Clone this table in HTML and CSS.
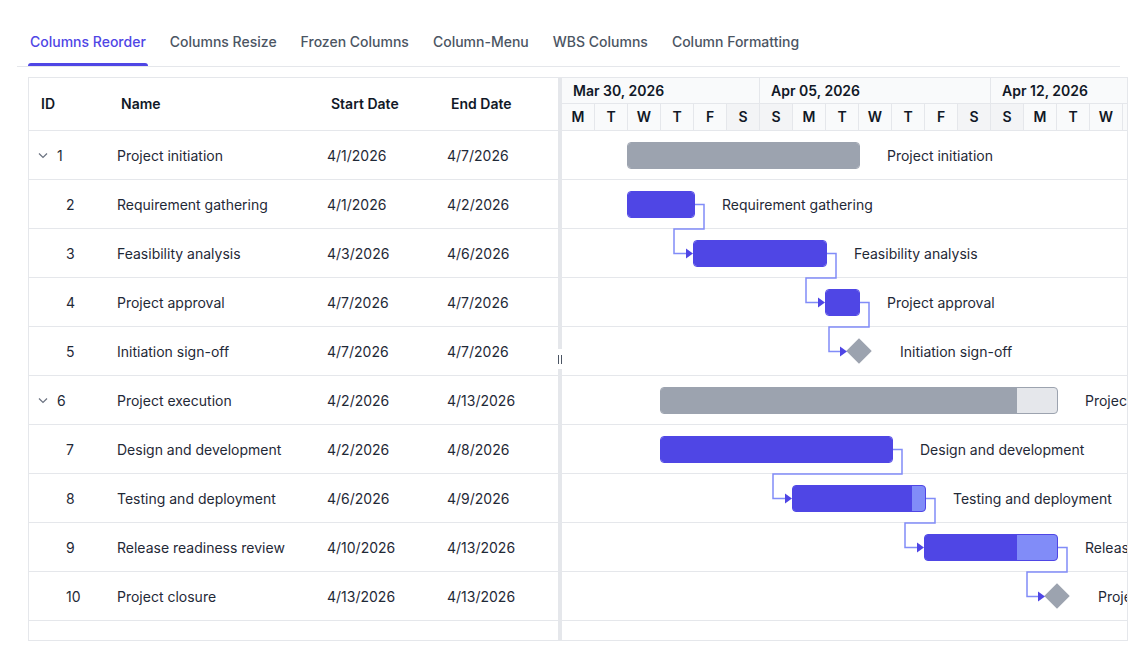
FILE: index.html
```html
<!DOCTYPE html>
<html lang="en">
<head>
<meta charset="utf-8">
<title>Gantt - Columns Reorder</title>
<link rel="stylesheet" href="styles.css">
</head>
<body>
<div class="page">
  <nav class="tabs">
    <div class="tab active">Columns Reorder</div>
    <div class="tab">Columns Resize</div>
    <div class="tab">Frozen Columns</div>
    <div class="tab">Column-Menu</div>
    <div class="tab">WBS Columns</div>
    <div class="tab">Column Formatting</div>
  </nav>

  <div class="gantt">
    <div class="grid">
      <div class="grid-row grid-head">
        <div class="cell">ID</div>
        <div class="cell">Name</div>
        <div class="cell">Start Date</div>
        <div class="cell">End Date</div>
      </div>
      <div class="grid-row">
        <div class="cell id"><svg class="chev" viewBox="0 0 12 12" width="12" height="12"><polyline points="2,4.5 6,8.5 10,4.5" fill="none" stroke="#6b7280" stroke-width="1.2"/></svg>1</div>
        <div class="cell">Project initiation</div>
        <div class="cell">4/1/2026</div>
        <div class="cell">4/7/2026</div>
      </div>
      <div class="grid-row">
        <div class="cell id"><span class="indent"></span>2</div>
        <div class="cell">Requirement gathering</div>
        <div class="cell">4/1/2026</div>
        <div class="cell">4/2/2026</div>
      </div>
      <div class="grid-row">
        <div class="cell id"><span class="indent"></span>3</div>
        <div class="cell">Feasibility analysis</div>
        <div class="cell">4/3/2026</div>
        <div class="cell">4/6/2026</div>
      </div>
      <div class="grid-row">
        <div class="cell id"><span class="indent"></span>4</div>
        <div class="cell">Project approval</div>
        <div class="cell">4/7/2026</div>
        <div class="cell">4/7/2026</div>
      </div>
      <div class="grid-row">
        <div class="cell id"><span class="indent"></span>5</div>
        <div class="cell">Initiation sign-off</div>
        <div class="cell">4/7/2026</div>
        <div class="cell">4/7/2026</div>
      </div>
      <div class="grid-row">
        <div class="cell id"><svg class="chev" viewBox="0 0 12 12" width="12" height="12"><polyline points="2,4.5 6,8.5 10,4.5" fill="none" stroke="#6b7280" stroke-width="1.2"/></svg>6</div>
        <div class="cell">Project execution</div>
        <div class="cell">4/2/2026</div>
        <div class="cell">4/13/2026</div>
      </div>
      <div class="grid-row">
        <div class="cell id"><span class="indent"></span>7</div>
        <div class="cell">Design and development</div>
        <div class="cell">4/2/2026</div>
        <div class="cell">4/8/2026</div>
      </div>
      <div class="grid-row">
        <div class="cell id"><span class="indent"></span>8</div>
        <div class="cell">Testing and deployment</div>
        <div class="cell">4/6/2026</div>
        <div class="cell">4/9/2026</div>
      </div>
      <div class="grid-row">
        <div class="cell id"><span class="indent"></span>9</div>
        <div class="cell">Release readiness review</div>
        <div class="cell">4/10/2026</div>
        <div class="cell">4/13/2026</div>
      </div>
      <div class="grid-row">
        <div class="cell id"><span class="indent"></span>10</div>
        <div class="cell">Project closure</div>
        <div class="cell">4/13/2026</div>
        <div class="cell">4/13/2026</div>
      </div>
    </div>

    <div class="splitter"><div class="gripper"><span></span><span></span></div></div>

    <div class="chart">
      <div class="tl-top">
        <div class="tl-month w6">Mar 30, 2026</div>
        <div class="tl-month w7">Apr 05, 2026</div>
        <div class="tl-month w7">Apr 12, 2026</div>
      </div>
      <div class="tl-days">
        <div class="day">M</div><div class="day">T</div><div class="day">W</div><div class="day">T</div><div class="day">F</div><div class="day we">S</div>
        <div class="day we">S</div><div class="day">M</div><div class="day">T</div><div class="day">W</div><div class="day">T</div><div class="day">F</div><div class="day we">S</div>
        <div class="day we">S</div><div class="day">M</div><div class="day">T</div><div class="day">W</div>
      </div>
      <div class="chart-body">
        <div class="c-row">
          <div class="bar parent" style="left:65px;width:233px"><div class="prog" style="width:100%"></div></div>
          <div class="label" style="left:325px">Project initiation</div>
        </div>
        <div class="c-row">
          <div class="bar" style="left:65px;width:68px"><div class="prog" style="width:100%"></div></div>
          <div class="label" style="left:160px">Requirement gathering</div>
        </div>
        <div class="c-row">
          <div class="bar" style="left:131px;width:134px"><div class="prog" style="width:100%"></div></div>
          <div class="label" style="left:292px">Feasibility analysis</div>
        </div>
        <div class="c-row">
          <div class="bar" style="left:263px;width:35px"><div class="prog" style="width:100%"></div></div>
          <div class="label" style="left:325px">Project approval</div>
        </div>
        <div class="c-row">
          <div class="ms" style="left:288px"></div>
          <div class="label" style="left:338px">Initiation sign-off</div>
        </div>
        <div class="c-row">
          <div class="bar parent" style="left:98px;width:398px"><div class="prog" style="width:90%"></div></div>
          <div class="label" style="left:523px">Project execution</div>
        </div>
        <div class="c-row">
          <div class="bar" style="left:98px;width:233px"><div class="prog" style="width:100%"></div></div>
          <div class="label" style="left:358px">Design and development</div>
        </div>
        <div class="c-row">
          <div class="bar" style="left:230px;width:134px"><div class="prog" style="width:90%"></div></div>
          <div class="label" style="left:391px">Testing and deployment</div>
        </div>
        <div class="c-row">
          <div class="bar" style="left:362px;width:134px"><div class="prog" style="width:70%"></div></div>
          <div class="label" style="left:523px">Release readiness review</div>
        </div>
        <div class="c-row">
          <div class="ms" style="left:486px"></div>
          <div class="label" style="left:536px">Project closure</div>
        </div>

        <svg class="links" width="565" height="490" viewBox="0 0 565 490">
          <g fill="none" stroke="#818cf8" stroke-width="1.5">
            <path d="M133 73.5 H142 V98 H112 V122.5 H126"/>
            <path d="M265 122.5 H274 V147 H244 V171.5 H258"/>
            <path d="M298 171.5 H307 V196 H267 V220.5 H278"/>
            <path d="M331 318.5 H340 V343 H211 V367.5 H225"/>
            <path d="M364 367.5 H373 V392 H343 V416.5 H357"/>
            <path d="M496 416.5 H505 V441 H465 V465.5 H476"/>
          </g>
          <g fill="#4f46e5">
            <path d="M124 117.5 L131 122.5 L124 127.5 Z"/>
            <path d="M256 166.5 L263 171.5 L256 176.5 Z"/>
            <path d="M278 215.5 L285 220.5 L278 225.5 Z"/>
            <path d="M223 362.5 L230 367.5 L223 372.5 Z"/>
            <path d="M355 411.5 L362 416.5 L355 421.5 Z"/>
            <path d="M476 460.5 L483 465.5 L476 470.5 Z"/>
          </g>
        </svg>
      </div>
    </div>
  </div>
</div>
</body>
</html>
```

FILE: styles.css
```css
* {
  box-sizing: border-box;
}

body {
  margin: 0;
  background: #ffffff;
  font-family: Inter, "Noto Sans", "Liberation Sans", sans-serif;
  font-size: 14px;
  color: #1f2937;
}

.page {
  padding: 30px 10px 0 17px;
}

/* Tabs */
.tabs {
  display: flex;
  gap: 20px;
  padding-left: 11px;
  margin-right: 8px;
  border-bottom: 1px solid #e5e7eb;
}

.tab {
  position: relative;
  padding: 0 2px 12px;
  line-height: 24px;
  font-weight: 500;
  color: #4b5563;
  white-space: nowrap;
}

.tab.active {
  color: #4f46e5;
}

.tab.active::after {
  content: "";
  position: absolute;
  left: 0;
  right: 0;
  bottom: 0;
  height: 3px;
  border-radius: 3px 3px 0 0;
  background: #4f46e5;
}

/* Gantt container */
.gantt {
  display: flex;
  margin: 10px 0 0 11px;
  height: 564px;
  border: 1px solid #e5e7eb;
  overflow: hidden;
}

/* Left grid */
.grid {
  flex: none;
  width: 529px;
}

.grid-row {
  display: grid;
  grid-template-columns: 80px 210px 120px 119px;
  align-items: center;
  height: 49px;
  border-bottom: 1px solid #e5e7eb;
}

.grid-head {
  height: 53px;
  padding-bottom: 1px;
  font-weight: 600;
  color: #111827;
}

.cell {
  padding-left: 8px;
  white-space: nowrap;
  overflow: hidden;
}

.grid-head .cell {
  padding-left: 12px;
}

.cell.id {
  display: flex;
  align-items: center;
}

.chev {
  flex: none;
  margin-right: 8px;
}

.indent {
  flex: none;
  display: inline-block;
  width: 29px;
}

/* Splitter */
.splitter {
  flex: none;
  position: relative;
  width: 4px;
  background: #e5e7eb;
}

.gripper {
  position: absolute;
  top: 50%;
  left: -1px;
  width: 6px;
  height: 20px;
  margin-top: -10px;
  background: #ffffff;
  display: flex;
  justify-content: center;
  align-items: center;
  gap: 2px;
}

.gripper span {
  display: block;
  width: 1px;
  height: 9px;
  background: #4b5563;
}

/* Chart */
.chart {
  flex: 1;
  min-width: 0;
  overflow: hidden;
}

.tl-top {
  display: flex;
  height: 26px;
  background: #f9fafb;
  border-bottom: 1px solid #e5e7eb;
}

.tl-month {
  flex: none;
  padding-left: 11px;
  line-height: 25px;
  font-weight: 600;
  color: #111827;
  border-right: 1px solid #e5e7eb;
  white-space: nowrap;
}

.tl-month.w6 {
  width: 198px;
}

.tl-month.w7 {
  width: 231px;
}

.tl-days {
  display: flex;
  height: 27px;
  background: #f9fafb;
  border-bottom: 1px solid #e5e7eb;
}

.day {
  flex: none;
  width: 33px;
  line-height: 26px;
  text-align: center;
  font-weight: 600;
  color: #111827;
  border-right: 1px solid #e5e7eb;
}

.day.we {
  background: #f3f4f6;
}

.chart-body {
  position: relative;
}

.c-row {
  position: relative;
  height: 49px;
  border-bottom: 1px solid #e5e7eb;
}

.bar {
  position: absolute;
  top: 11px;
  height: 27px;
  border-radius: 4px;
  border: 1px solid #4f46e5;
  background: #818cf8;
  overflow: hidden;
}

.bar .prog {
  height: 100%;
  background: #4f46e5;
}

.bar.parent {
  border-color: #9ca3af;
  background: #e5e7eb;
}

.bar.parent .prog {
  background: #9ca3af;
}

.ms {
  position: absolute;
  top: 15px;
  width: 18px;
  height: 18px;
  background: #9ca3af;
  transform: rotate(45deg);
}

.label {
  position: absolute;
  top: 1px;
  line-height: 48px;
  white-space: nowrap;
  color: #1f2937;
}

.links {
  position: absolute;
  left: 0;
  top: 0;
  pointer-events: none;
}
```
